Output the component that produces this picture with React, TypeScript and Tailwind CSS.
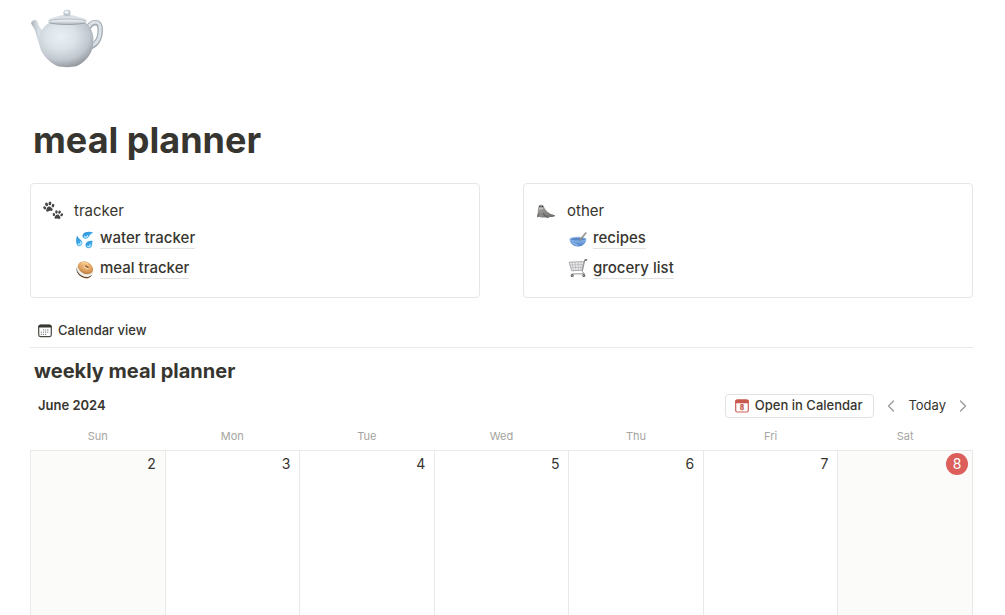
import { ChevronLeft, ChevronRight } from "lucide-react";
import React from "react";

const Teapot = () => (
  <svg width="76" height="60" viewBox="0 0 76 60" aria-hidden="true">
    <defs>
      <radialGradient id="potBody" cx="0.4" cy="0.32" r="0.7">
        <stop offset="0" stopColor="#e8eff5" />
        <stop offset="0.4" stopColor="#dbe2e8" />
        <stop offset="0.75" stopColor="#c0c7ce" />
        <stop offset="1" stopColor="#94989e" />
      </radialGradient>
      <linearGradient id="potSpout" x1="0" y1="0.5" x2="1" y2="0.3">
        <stop offset="0" stopColor="#a0a7ae" />
        <stop offset="0.45" stopColor="#d8dfe5" />
        <stop offset="1" stopColor="#cfd6dd" />
      </linearGradient>
      <linearGradient id="potLid" x1="0" y1="0" x2="0" y2="1">
        <stop offset="0" stopColor="#d2d9df" />
        <stop offset="0.6" stopColor="#e6ebef" />
        <stop offset="1" stopColor="#b0b8c0" />
      </linearGradient>
    </defs>
    <path
      d="M58 21C60 14 69 12 70 19C71 28 68 36 60 39"
      fill="none"
      stroke="#a3abb3"
      strokeWidth="5.500"
      strokeLinecap="round"
    />
    <path
      d="M58 20.500C60 13.500 69 11.500 70 18.500C71 28 68 35.500 60 38.500"
      fill="none"
      stroke="#dbe1e7"
      strokeWidth="3"
      strokeLinecap="round"
    />
    <path
      d="M1.200 15.500C0.800 13 5.500 10.800 7.200 13C9 18 11 24.500 18 24L18 47C10 42 8 33 5.500 24C4.500 20 2 18 1.200 15.500Z"
      fill="url(#potSpout)"
    />
    <path
      d="M19 14.500C12 20 8.500 26 9 34C10 46 19 54 27 58C32 59.500 42 59.500 47 58C57 53 63.500 44 63.500 33C63.500 25 61 18.500 55 14.500Z"
      fill="url(#potBody)"
    />
    <path d="M18 14C17.500 11 22 9.500 27 8.500C31 7.500 33 6.500 37 6.500C41 6.500 43 7.500 47 8.500C52 9.500 57.500 11 57 14C49 17.500 25 17.500 18 14Z" fill="url(#potLid)" />
    <path d="M19 12.500C27 10.500 47 10.500 56 12.500" fill="none" stroke="#aeb6be" strokeWidth="0.900" />
    <path d="M19.500 14.800C27 17 48 17 55.500 14.800" fill="none" stroke="#98a1aa" strokeWidth="1" />
    <ellipse cx="37" cy="5" rx="3.600" ry="3.200" fill="#bcc4cc" />
    <ellipse cx="36.600" cy="4.200" rx="2.200" ry="1.600" fill="#edf2f5" />
  </svg>
);

const Paws = () => (
  <svg width="20" height="20" viewBox="0 0 20 20" fill="#454548" aria-hidden="true">
    <g transform="rotate(-8 6 6)">
      <path d="M5.800 5.500C7.500 5.300 8 6.800 9 8C10 9.500 8.500 10.700 7 10C6 9.600 5.500 10.300 4.300 10.400C2.600 10.500 2.300 9 3.200 7.800C4 6.700 4.200 5.700 5.800 5.500Z" />
      <ellipse cx="1.600" cy="6.200" rx="1.300" ry="1.700" transform="rotate(-25 1.600 6.200)" />
      <ellipse cx="4" cy="3" rx="1.400" ry="1.900" transform="rotate(-8 4 3)" />
      <ellipse cx="7.400" cy="2.600" rx="1.400" ry="1.900" transform="rotate(10 7.400 2.600)" />
      <ellipse cx="10.200" cy="5.200" rx="1.300" ry="1.800" transform="rotate(25 10.200 5.200)" />
    </g>
    <g transform="translate(9.500 8.500) rotate(8 5 5) scale(0.900)">
      <path d="M5.800 5.500C7.500 5.300 8 6.800 9 8C10 9.500 8.500 10.700 7 10C6 9.600 5.500 10.300 4.300 10.400C2.600 10.500 2.300 9 3.200 7.800C4 6.700 4.200 5.700 5.800 5.500Z" />
      <ellipse cx="1.600" cy="6.200" rx="1.300" ry="1.700" transform="rotate(-25 1.600 6.200)" />
      <ellipse cx="4" cy="3" rx="1.400" ry="1.900" transform="rotate(-8 4 3)" />
      <ellipse cx="7.400" cy="2.600" rx="1.400" ry="1.900" transform="rotate(10 7.400 2.600)" />
      <ellipse cx="10.200" cy="5.200" rx="1.300" ry="1.800" transform="rotate(25 10.200 5.200)" />
    </g>
  </svg>
);

const Seal = () => (
  <svg width="20" height="20" viewBox="0 0 20 20" aria-hidden="true">
    <defs>
      <linearGradient id="sealBody" x1="0" y1="0" x2="1" y2="1">
        <stop offset="0" stopColor="#a8a6a3" />
        <stop offset="0.5" stopColor="#8c8a88" />
        <stop offset="1" stopColor="#666563" />
      </linearGradient>
    </defs>
    <path
      d="M2.500 5.500C2.800 3.200 7.300 3 8 5.700C8.500 8.300 11 10.500 13.500 12.300C15 13.300 16.500 13.600 18.800 14.300C19.500 14.900 18.500 15.600 17.500 15.700C13 16.600 5 17 2 15.800C1.500 12 1.800 8.500 2.500 5.500Z"
      fill="url(#sealBody)"
    />
    <ellipse cx="5.100" cy="7.200" rx="1.900" ry="1.300" fill="#cbc8c4" />
    <circle cx="3.900" cy="5.500" r="0.700" fill="#292929" />
    <circle cx="6.500" cy="5.500" r="0.700" fill="#292929" />
    <path d="M4.500 6.400H5.700L5.100 7.200Z" fill="#333" />
    <path
      d="M2.500 11.500C1 13.500 0.500 15.500 1.300 16.500C3 16.500 3.700 14 3.700 11.800Z"
      fill="#7b7977"
    />
    <path d="M7.500 12C8 14.500 9.500 16 12.500 16.600" fill="none" stroke="#565452" strokeWidth="1" />
  </svg>
);

const Droplets = () => (
  <svg width="18" height="18" viewBox="0 0 18 18" aria-hidden="true">
    <defs>
      <linearGradient id="drop" x1="0" y1="0" x2="1" y2="1">
        <stop offset="0" stopColor="#248bd1" />
        <stop offset="0.6" stopColor="#43aae9" />
        <stop offset="1" stopColor="#9eddfc" />
      </linearGradient>
    </defs>
    <g fill="url(#drop)">
      <path d="M17.500 1.500C13 0 7.500 0.800 6.500 4.200C6 7.200 9.500 8.800 11.700 7C13.800 5 14 3 17.500 1.500Z" />
      <path d="M1 4.500C0 8 -0.600 12.500 1.800 14.700C4.300 16.500 7.300 13.700 6.300 11C5.300 8.500 2 7.500 1 4.500Z" />
      <path d="M16.800 10C14 9 10 10.300 9.500 13.500C9.200 16.800 12.800 18.300 15 16.600C17.200 14.500 15.600 12 16.800 10Z" />
    </g>
    <path d="M8.500 5.500C9.500 6.800 10.800 6 11.500 4.800M2.500 13C3.800 14 5 12.500 4.700 11.300M11.500 15.300C12.800 16.200 14 15 14 13.800" stroke="#b9e7ff" strokeWidth="1.300" fill="none" strokeLinecap="round" />
  </svg>
);

const Bagel = () => (
  <svg width="18" height="18" viewBox="0 0 18 18" aria-hidden="true">
    <defs>
      <radialGradient id="bagel" cx="0.4" cy="0.3" r="0.75">
        <stop offset="0" stopColor="#f3c488" />
        <stop offset="0.6" stopColor="#dfa260" />
        <stop offset="1" stopColor="#b57539" />
      </radialGradient>
    </defs>
    <g transform="rotate(28 9 9)">
      <ellipse cx="9.600" cy="11.400" rx="7.600" ry="5.600" fill="#bd8045" />
      <ellipse cx="9" cy="10.400" rx="8.300" ry="6" fill="#40352b" />
      <ellipse cx="8.900" cy="9.300" rx="8.400" ry="6.200" fill="#f0eee7" />
      <ellipse cx="8.400" cy="6.800" rx="8" ry="5.900" fill="url(#bagel)" />
      <ellipse cx="9" cy="5.400" rx="2.400" ry="1" fill="#99602f" />
      <path d="M6.500 6C7.500 6.900 10.300 6.900 11.400 5.900" stroke="#fff0d2" strokeWidth="0.900" fill="none" />
      <path d="M3 4.500C4.500 2.700 7 2.200 9 2.300" stroke="#ffe1af" strokeWidth="0.800" fill="none" />
    </g>
  </svg>
);

const Bowl = () => (
  <svg width="18" height="18" viewBox="0 0 18 18" aria-hidden="true">
    <defs>
      <linearGradient id="bowl" x1="0" y1="0" x2="0" y2="1">
        <stop offset="0" stopColor="#8ebbf0" />
        <stop offset="1" stopColor="#4d80c7" />
      </linearGradient>
    </defs>
    <path d="M0.500 8C0.500 12 4.500 15.500 9 15.500C13.500 15.500 17.300 12 17.400 8Z" fill="url(#bowl)" />
    <ellipse cx="9" cy="8" rx="8.500" ry="2.200" fill="#8eb7eb" />
    <ellipse cx="9" cy="8.200" rx="7.300" ry="1.400" fill="#5887c5" />
    <path d="M11 8.800L16.800 2" stroke="#85817d" strokeWidth="1.600" strokeLinecap="round" />
    <path d="M11 8.300L16.500 2" stroke="#c5c0bb" strokeWidth="0.600" />
    <path d="M3.500 11.500C5 13.500 7 14 9 14" stroke="#b5d5fa" strokeWidth="0.800" fill="none" />
  </svg>
);

const Cart = () => (
  <svg width="20" height="20" viewBox="0 0 20 20" fill="none" aria-hidden="true">
    <path d="M1.200 3.200L15.800 2.600L14.200 11.200L3.700 11.800Z" fill="#ececed" stroke="#96969a" strokeWidth="0.800" />
    <path d="M4 3.200L5.500 11.500M7 3.200L8 11.500M10 3L10.500 11.500M13 2.800L12.700 11.200M1.800 6L15 5.500M2.500 8.700L14.500 8.300" stroke="#aaaaad" strokeWidth="0.600" />
    <path d="M18.500 1L16.800 1.200L14.200 12.500L16.500 14.800L3.700 15" stroke="#85858a" strokeWidth="0.900" />
    <path d="M17 1.100L18.800 0.900" stroke="#505055" strokeWidth="1.200" strokeLinecap="round" />
    <circle cx="4.200" cy="16.400" r="1.500" fill="#5e5e62" />
    <circle cx="15.800" cy="16.400" r="1.500" fill="#5e5e62" />
    <circle cx="4.200" cy="16.400" r="0.500" fill="#ccc" />
    <circle cx="15.800" cy="16.400" r="0.500" fill="#ccc" />
  </svg>
);

const CalendarIcon = () => (
  <svg width="14" height="14" viewBox="0 0 14 14" fill="none" aria-hidden="true">
    <rect x="0.700" y="1.200" width="12.600" height="11.400" rx="1.800" stroke="#4a4843" strokeWidth="1.200" />
    <path d="M0.500 3.500V3C0.500 1.700 1.400 0.800 2.500 0.800H11.500C12.600 0.800 13.500 1.700 13.500 3V3.500Z" fill="#37352f" />
    <path d="M5 6H11.300M2.800 8.200H11.300M2.800 10.400H9" stroke="#6c6a66" strokeWidth="0.900" strokeDasharray="1.200 0.900" />
  </svg>
);

const DateIcon = () => (
  <svg width="14" height="14" viewBox="0 0 14 14" aria-hidden="true">
    <rect x="0.700" y="1" width="12.600" height="12" rx="1.500" fill="#fff" stroke="#cb6157" strokeWidth="1.200" />
    <path d="M0.200 4.200V2.500C0.200 1.200 1 0.400 2.200 0.400H11.800C13 0.400 13.800 1.200 13.800 2.500V4.200Z" fill="#c9584c" />
    <text x="7" y="11.200" textAnchor="middle" fontFamily="Liberation Serif, serif" fontWeight="700" fontSize="8" fill="#c9584c" stroke="#c9584c" strokeWidth="0.300">
      8
    </text>
  </svg>
);

const sections = [
  {
    title: "tracker",
    icon: <Paws />,
    links: [
      { label: "water tracker", icon: <Droplets /> },
      { label: "meal tracker", icon: <Bagel /> },
    ],
  },
  {
    title: "other",
    icon: <Seal />,
    links: [
      { label: "recipes", icon: <Bowl /> },
      { label: "grocery list", icon: <Cart /> },
    ],
  },
];

const days = [
  { name: "Sun", date: 2, weekend: true },
  { name: "Mon", date: 3 },
  { name: "Tue", date: 4 },
  { name: "Wed", date: 5 },
  { name: "Thu", date: 6 },
  { name: "Fri", date: 7 },
  { name: "Sat", date: 8, weekend: true, today: true },
];

const App: React.FC = () => {
  return (
    <main className="h-screen overflow-hidden bg-white pl-[30px] pr-8 pt-2 font-['Inter',sans-serif] text-[#37352f]">
      <Teapot />

      <h1 className="mt-12 pl-[3px] text-4xl leading-[48px] font-bold">meal planner</h1>

      <div className="mt-[19px] grid grid-cols-2 gap-[43px]">
        {sections.map((section) => (
          <section
            key={section.title}
            className="h-[115px] rounded border border-[#e6e6e4] px-3 pt-[17px]"
          >
            <h2 className="flex h-5 items-center gap-[11px] text-[15px]">
              {section.icon}
              {section.title}
            </h2>
            <ul className="pl-8">
              {section.links.map((link) => (
                <li key={link.label} className="flex h-[30px] items-end gap-[5px] pb-0.5">
                  <span className="flex w-5 justify-center">{link.icon}</span>
                  <a
                    href="#"
                    className="border-b border-[#e3e2e0] text-[15px] leading-5 font-medium"
                  >
                    {link.label}
                  </a>
                </li>
              ))}
            </ul>
          </section>
        ))}
      </div>

      <div className="mt-[14px] flex h-9 items-center border-b border-[#e9e9e7] pt-0.5 pl-2">
        <button className="flex items-center gap-1.5 text-[13px] font-medium">
          <CalendarIcon />
          Calendar view
        </button>
      </div>

      <h2 className="mt-2 pl-1 text-xl leading-[30px] font-bold">weekly meal planner</h2>

      <div className="mt-2 flex h-6 items-center gap-[7px] pl-2 text-[13px]">
        <h3 className="flex-1 font-semibold">June 2024</h3>
        <button className="flex h-6 items-center gap-1.5 rounded border border-[#e3e2e0] pr-[11px] pl-[9px] font-medium">
          <DateIcon />
          Open in Calendar
        </button>
        <button aria-label="Previous week" className="text-[#9b9a97]">
          <ChevronLeft size={20} strokeWidth={1.5} />
        </button>
        <button>Today</button>
        <button aria-label="Next week" className="text-[#9b9a97]">
          <ChevronRight size={20} strokeWidth={1.5} />
        </button>
      </div>

      <table className="mt-1.5 w-full table-fixed border-collapse">
        <thead>
          <tr>
            {days.map((day) => (
              <th key={day.name} className="h-[26px] pb-0.5 text-[11px] font-normal text-[#a5a4a1]">
                {day.name}
              </th>
            ))}
          </tr>
        </thead>
        <tbody>
          <tr>
            {days.map((day) => (
              <td
                key={day.date}
                className={`h-44 border border-[#e9e9e7] pt-0.5 pr-1 align-top text-sm ${day.weekend ? "bg-[#fbfbfa]" : ""}`}
              >
                <span
                  className={`ml-auto flex h-[22px] items-center justify-center ${day.today ? "w-[22px] rounded-full bg-[#dc5f5b] text-white" : "w-[18px]"}`}
                >
                  {day.date}
                </span>
              </td>
            ))}
          </tr>
        </tbody>
      </table>
    </main>
  );
};

export default App;
